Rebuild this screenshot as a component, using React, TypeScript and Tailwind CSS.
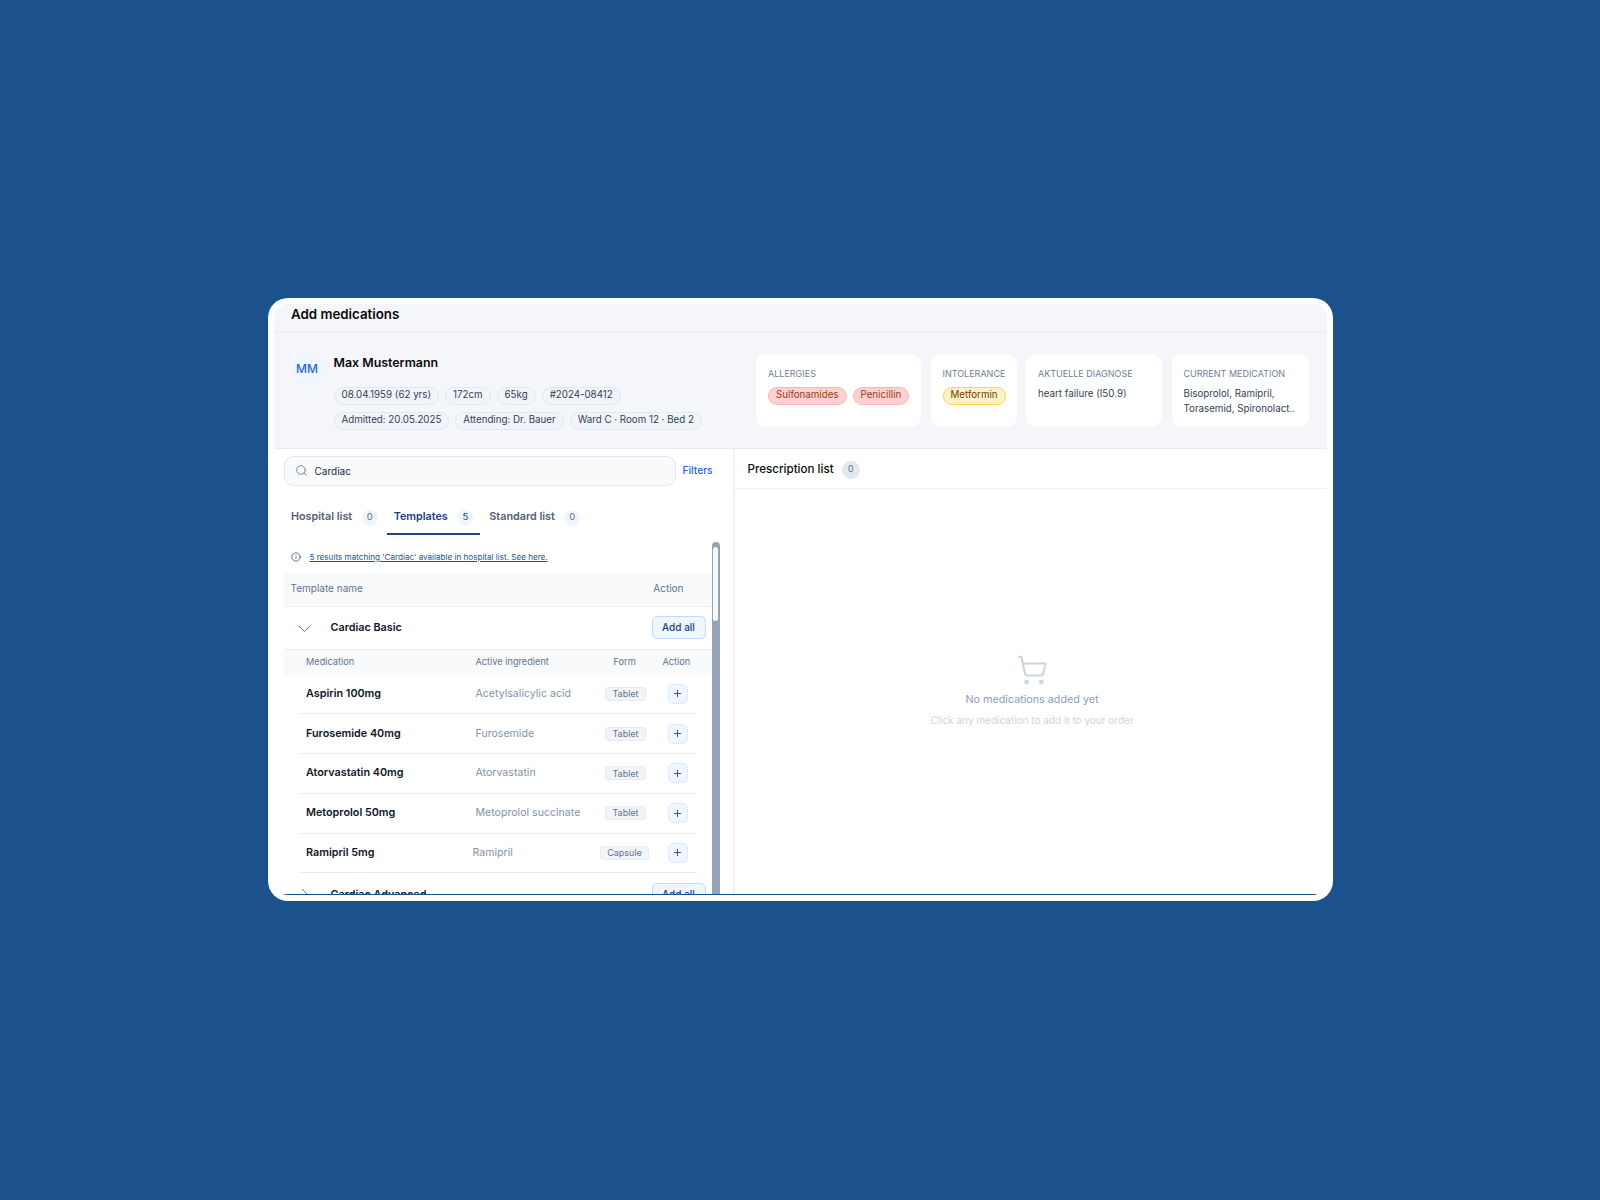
import { Info, Plus, Search, ShoppingCart } from "lucide-react";

const pillsA = ["08.04.1959 (62 yrs)", "172cm", "65kg", "#2024-08412"];
const pillsB = ["Admitted: 20.05.2025", "Attending: Dr. Bauer", "Ward C · Room 12 · Bed 2"];
const meds = [
  { name: "Aspirin 100mg", ing: "Acetylsalicylic acid", form: "Tablet", nameW: "w-[169.5px]", ingW: "w-[115px]", formPad: "" },
  { name: "Furosemide 40mg", ing: "Furosemide", form: "Tablet", nameW: "w-[169.5px]", ingW: "w-[115px]", formPad: "" },
  { name: "Atorvastatin 40mg", ing: "Atorvastatin", form: "Tablet", nameW: "w-[169.5px]", ingW: "w-[115px]", formPad: "" },
  { name: "Metoprolol 50mg", ing: "Metoprolol succinate", form: "Tablet", nameW: "w-[169.5px]", ingW: "w-[115px]", formPad: "" },
  { name: "Ramipril 5mg", ing: "Ramipril", form: "Capsule", nameW: "w-[166.5px]", ingW: "w-[118px]", formPad: "pr-[2px]" },
];

function Pill({ text }: { text: string }) {
  return (
    <span className="flex h-[18px] items-center rounded-full border border-[#e2e8f0] bg-[#f1f5f9] px-[7px] text-[9.75px] text-[#334155]">
      {text}
    </span>
  );
}

function Card({ title, className, children }: { title: string; className: string; children: React.ReactNode }) {
  return (
    <div className={`h-[73px] rounded-[10px] bg-white px-3 pt-[13px] ${className}`}>
      <div className="text-[9px] leading-[14px] whitespace-nowrap text-[#718096]">{title}</div>
      {children}
    </div>
  );
}

function Tab({ label, count, active }: { label: string; count: string; active?: boolean }) {
  return (
    <div className={`flex h-[38px] items-center gap-[9.5px] border-b-2 px-[7px] pt-[6px] ${active ? "border-[#1c4480]" : "border-transparent"}`}>
      <span className={`text-[10.8px] font-semibold ${active ? "text-[#1e3f7a]" : "text-[#526079]"}`}>{label}</span>
      <span className={`flex h-4 w-4 items-center justify-center rounded-full text-[9.5px] ${active ? "bg-[#eff6ff] text-[#1e3f7a]" : "bg-[#f1f5f9] text-[#64748b]"}`}>
        {count}
      </span>
    </div>
  );
}

function AddAll() {
  return (
    <button className="flex h-[23px] w-[54px] shrink-0 items-center justify-center rounded-[5px] border border-[#bfdbfe] bg-[#eff6ff] text-[10px] font-medium text-[#1e4080]">
      Add all
    </button>
  );
}

export default function App() {
  return (
    <div className="flex h-[1200px] items-center justify-center bg-[#1b528c] pb-[2px] font-['Inter',sans-serif]">
      <div className="h-[603px] w-[1065px] rounded-[20px] bg-white p-1.5">
        <div className="flex h-[591px] flex-col overflow-hidden rounded-[14px] bg-white">
          <div className="flex h-[29px] shrink-0 items-center border-b border-[#e8ecf2] bg-[#f4f6fa] pr-[17px] pb-[5px] pl-[17.5px] text-[13.3px] font-semibold text-[#0a0a0a]">
            Add medications
          </div>
          <div className="flex h-[116px] shrink-0 justify-between border-b border-[#e8ecf2] bg-[#f4f6fa] pr-[18px] pl-[17px]">
            <div className="flex gap-2.5 pt-[19px]">
              <div className="flex h-[34px] w-[33px] items-center justify-center rounded-full bg-[#eff6ff] pt-[1px] text-[12px] font-medium text-[#2563eb]">
                MM
              </div>
              <div className="pt-px">
                <div className="text-[12.4px] leading-5 font-semibold text-[#0a0a0a]">Max Mustermann</div>
                <div className="mt-[14px] flex gap-[6px]">
                  {pillsA.map((p) => (
                    <Pill key={p} text={p} />
                  ))}
                </div>
                <div className="mt-[7px] flex gap-[6px]">
                  {pillsB.map((p) => (
                    <Pill key={p} text={p} />
                  ))}
                </div>
              </div>
            </div>
            <div className="flex gap-[9.5px] pt-[21px]">
              <Card title="ALLERGIES" className="w-[165px]">
                <div className="mt-[6px] flex gap-[6px]">
                  <span className="flex h-[18px] items-center rounded-full border border-[#fcb5b8] bg-[#fed0d2] px-[7px] text-[9.75px] text-[#92400e]">Sulfonamides</span>
                  <span className="flex h-[18px] items-center rounded-full border border-[#fcb5b8] bg-[#fed0d2] px-[7px] text-[9.75px] text-[#92400e]">Penicillin</span>
                </div>
              </Card>
              <Card title="INTOLERANCE" className="w-[86px]">
                <div className="mt-[6px] flex">
                  <span className="flex h-[18px] items-center rounded-full border border-[#fcd34d] bg-[#fef3c7] px-[7px] text-[9.75px] text-[#78350f]">Metformin</span>
                </div>
              </Card>
              <Card title="AKTUELLE DIAGNOSE" className="w-[136px]">
                <div className="mt-[5px] text-[9.75px] leading-[15px] text-[#334155]">heart failure (I50.9)</div>
              </Card>
              <Card title="CURRENT MEDICATION" className="w-[137px]">
                <div className="mt-[5px] text-[9.75px] leading-[15px] text-[#334155]">Bisoprolol, Ramipril, Torasemid, Spironolact..</div>
              </Card>
            </div>
          </div>
          <div className="flex min-h-0 flex-1">
            <div className="flex w-[461px] shrink-0 flex-col border-r-2 border-[#eef2f7] pl-[10px]">
              <div className="mt-[7px] flex shrink-0 items-center">
                <div className="flex h-[30px] w-[392px] items-center gap-[7px] rounded-[9px] border border-[#e2e8f0] bg-[#f8fafc] px-[10px]">
                  <Search size={13} strokeWidth={1.5} className="text-[#64748b]" />
                  <span className="pt-px text-[10px] text-[#1e293b]">Cardiac</span>
                </div>
                <span className="ml-[7px] text-[10.2px] font-medium text-[#2563eb]">Filters</span>
              </div>
              <div className="mt-[11px] flex shrink-0 gap-[2px] pl-[0.5px]">
                <Tab label="Hospital list" count="0" />
                <Tab label="Templates" count="5" active />
                <Tab label="Standard list" count="0" />
              </div>
              <div className="relative mt-[7px] min-h-0 w-[436px] flex-1 overflow-hidden pr-2">
                <div className="absolute top-0 right-0 bottom-0 w-2 rounded-t-[4px] bg-[#94a3b8]">
                  <div className="mx-auto mt-[5px] h-[74px] w-[5px] rounded-full bg-[#f8fafc]" />
                </div>
                <div className="flex h-[30px] items-center gap-[9px] pl-[7px] pt-px">
                  <Info size={10} strokeWidth={1.75} className="text-[#1e3f7a]" />
                  <span className="text-[8.1px] text-[#1c5390] underline">5 results matching 'Cardiac' available in hospital list. See here.</span>
                </div>
                <div className="flex h-[35px] items-center justify-between border-b border-[#eef2f7] bg-[#f8fafc] pr-[28px] pl-[7px] text-[10px] text-[#64748b]">
                  <span>Template name</span>
                  <span>Action</span>
                </div>
                <div className="flex h-[43px] items-center border-b border-[#e8ecf2] pr-[6px] pl-[14px]">
                  <svg width="13" height="8" viewBox="0 0 13 8" fill="none" stroke="#64748b" strokeWidth="1" className="mt-[2px]">
                    <path d="M1 1l5.5 5.5L12 1" />
                  </svg>
                  <span className="ml-[20px] flex-1 pt-[2px] text-[10.8px] font-semibold text-[#0f172a]">Cardiac Basic</span>
                  <AddAll />
                </div>
                <div className="flex h-[25px] items-center bg-[#f8fafc] pl-[22.5px] text-[9.2px] text-[#64748b]">
                  <span className="w-[169.5px]">Medication</span>
                  <span className="w-[138px]">Active ingredient</span>
                  <span className="w-[49px]">Form</span>
                  <span>Action</span>
                </div>
                {meds.map((m) => (
                  <div key={m.name} className="ml-[15px] flex h-[39.75px] w-[398px] items-center border-b border-[#e8ecf2] pl-[7.5px]">
                    <span className={`shrink-0 text-[10.8px] font-semibold text-[#0f172a] ${m.nameW}`}>{m.name}</span>
                    <span className={`shrink-0 text-[10.6px] whitespace-nowrap text-[#8493a8] ${m.ingW}`}>{m.ing}</span>
                    <span className={`flex w-[70px] shrink-0 justify-center ${m.formPad}`}>
                      <span className="flex h-[14px] items-center rounded-[3px] border border-[#e8ecf2] bg-[#f1f5f9] px-[6.5px] text-[9px] text-[#64748b]">{m.form}</span>
                    </span>
                    <span className="ml-[7px] flex h-5 w-5 items-center justify-center rounded-[5px] border border-[#dbeafe] bg-[#eff6ff] text-[#1c4f8c]">
                      <Plus size={11} strokeWidth={2} />
                    </span>
                  </div>
                ))}
                <div className="flex h-[43px] items-center pr-[6px] pl-[17px]">
                  <svg width="8" height="14" viewBox="0 0 8 14" fill="none" stroke="#64748b" strokeWidth="1">
                    <path d="M1 1l6 6-6 6" />
                  </svg>
                  <span className="ml-[22px] flex-1 text-[10.8px] font-semibold text-[#0f172a]">Cardiac Advanced</span>
                  <AddAll />
                </div>
              </div>
            </div>
            <div className="flex min-w-0 flex-1 flex-col">
              <div className="flex h-[40px] shrink-0 items-center gap-[8px] border-b border-[#eef2f7] px-[13px] pt-[3px]">
                <span className="text-[11.6px] font-medium text-[#0a0a0a]">Prescription list</span>
                <span className="flex h-[18px] w-[18px] items-center justify-center rounded-full bg-[#e2e8f0] text-[9.5px] text-[#64748b]">0</span>
              </div>
              <div className="flex flex-col items-center pt-[165px] pl-[3px]">
                <ShoppingCart size={32} strokeWidth={1.5} className="text-[#cbd5e1]" />
                <div className="mt-[6px] text-[10.75px] leading-[16px] text-[#8e9db5]">No medications added yet</div>
                <div className="mt-[5.5px] text-[10px] leading-[15px] text-[#cbd5e1]">Click any medication to add it to your order</div>
              </div>
            </div>
          </div>
          <div className="mr-[10px] ml-[9px] h-px shrink-0 bg-[#1b528c]" />
        </div>
      </div>
    </div>
  );
}
